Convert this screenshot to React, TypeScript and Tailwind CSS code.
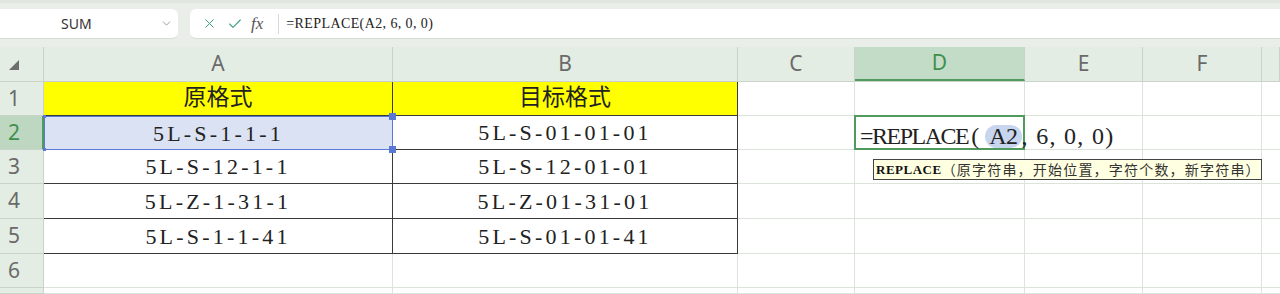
import { ChevronDown, X, Check } from 'lucide-react';

const cols = [44, 349, 345, 117, 170, 118, 119, 18];
const rowHeights = [34, 34, 34, 35, 35, 34, 6];
const letters = ['A', 'B', 'C', 'D', 'E', 'F', ''];

const serif = { fontFamily: '"Liberation Serif", "Noto Sans CJK SC", serif' };

const data: [string, string][] = [
  ['原格式', '目标格式'],
  ['5L-S-1-1-1', '5L-S-01-01-01'],
  ['5L-S-12-1-1', '5L-S-12-01-01'],
  ['5L-Z-1-31-1', '5L-Z-01-31-01'],
  ['5L-S-1-1-41', '5L-S-01-01-41'],
];

function Toolbar() {
  return (
    <div className="h-[47px] bg-[#e9eee9] border-t-[3px] border-[#dfe5df] flex items-start pt-[6px]">
      {/* 名称框 */}
      <div className="w-[178px] h-[30px] bg-white rounded-r-md border-b border-[#d6dcd6] flex items-center relative">
        <span className="absolute left-[61px] text-[14px] text-[#333]" style={{ fontFamily: '"Noto Sans", sans-serif' }}>
          SUM
        </span>
        <ChevronDown className="absolute left-[160px] w-[13px] h-[13px] text-[#888]" strokeWidth={1.5} />
      </div>
      {/* 数式バー */}
      <div className="ml-[12px] flex-1 h-[30px] bg-white rounded-l-md border-b border-[#d6dcd6] flex items-center">
        <X className="ml-[12px] w-[15px] h-[15px] text-[#3a9e7f]" strokeWidth={1.6} />
        <Check className="ml-[10px] w-[16px] h-[16px] text-[#3a9e7f]" strokeWidth={1.6} />
        <span className="ml-[8px] text-[17px] italic text-[#555]" style={serif}>
          fx
        </span>
        <div className="ml-[15px] w-px h-[20px] bg-[#d8d8d8]" />
        <span className="ml-[7px] text-[14px] text-[#222] tracking-[0.4px]" style={serif}>
          =REPLACE(A2, 6, 0, 0)
        </span>
      </div>
    </div>
  );
}

function HeaderRow() {
  return (
    <div className="flex h-[35px] bg-[#e4ede4] border-b border-[#c9d3c9]">
      <div className="w-[44px] shrink-0 border-r border-[#c9d3c9] flex items-end pb-[11px] pl-[9px]">
        <svg width="10" height="10" viewBox="0 0 10 10">
          <polygon points="10,0 10,10 0,10" fill="#6e6e6e" />
        </svg>
      </div>
      {letters.map((l, i) => {
        const active = l === 'D';
        return (
          <div
            key={i}
            style={{ width: cols[i + 1] }}
            className={
              active
                ? 'shrink-0 flex items-center justify-center bg-[#c3dcc7] border-b-2 border-[#4f9a5c] border-r border-r-[#c9d3c9] text-[#3f8f4d] text-[21px]'
                : 'shrink-0 flex items-center justify-center border-r border-[#c9d3c9] text-[#6a6a6a] text-[21px]'
            }
          >
            <span style={{ fontFamily: '"Noto Sans", sans-serif' }}>{l}</span>
          </div>
        );
      })}
    </div>
  );
}

function Row({ index }: { index: number }) {
  const h = rowHeights[index];
  const r = data[index];
  const rowActive = index === 1;
  const inTable = index < 5;
  return (
    <div className="flex" style={{ height: h }}>
      <div
        className={
          rowActive
            ? 'w-[44px] shrink-0 bg-[#bdd7c1] border-r-2 border-[#4f9a5c] border-b border-b-[#c9d3c9] flex items-center pl-[8px] text-[21px] text-[#3f8f4d]'
            : 'w-[44px] shrink-0 bg-[#e4ede4] border-r border-b border-[#c9d3c9] flex items-center pl-[8px] text-[21px] text-[#6a6a6a]'
        }
        style={{ fontFamily: '"Noto Sans", sans-serif' }}
      >
        {h > 10 ? index + 1 : ''}
      </div>
      {/* A 列 */}
      <div
        style={{ width: cols[1] }}
        className={
          index === 0
            ? 'shrink-0 bg-[#ffff00] border-r border-b border-[#3a3a3a] flex items-center justify-center'
            : index === 1
              ? 'shrink-0 bg-[#dbe2f3] border border-[#5a78d4] relative flex items-center justify-center'
              : inTable
                ? 'shrink-0 border-r border-b border-[#3a3a3a] flex items-center justify-center'
                : 'shrink-0 border-r border-b border-[#dbe3db]'
        }
      >
        {r && (
          <span className={index === 0 ? 'text-[23px] text-[#222]' : 'text-[22px] text-[#222] tracking-[3.2px]'} style={serif}>
            {r[0]}
          </span>
        )}
        {index === 1 && (
          <>
            <span className="absolute -left-[2px] -top-[2px] w-[3px] h-[3px] bg-[#5a78d4]" />
            <span className="absolute -right-[4px] -top-[4px] w-[7px] h-[7px] bg-[#5a78d4]" />
            <span className="absolute -right-[4px] -bottom-[4px] w-[7px] h-[7px] bg-[#5a78d4]" />
            <span className="absolute -left-[2px] -bottom-[2px] w-[3px] h-[3px] bg-[#5a78d4]" />
          </>
        )}
      </div>
      {/* B 列 */}
      <div
        style={{ width: cols[2] }}
        className={
          index === 0
            ? 'shrink-0 bg-[#ffff00] border-r border-b border-[#3a3a3a] flex items-center justify-center'
            : inTable
              ? 'shrink-0 border-r border-b border-[#3a3a3a] flex items-center justify-center'
              : 'shrink-0 border-r border-b border-[#dbe3db]'
        }
      >
        {r && (
          <span className={index === 0 ? 'text-[23px] text-[#222]' : 'text-[22px] text-[#222] tracking-[3.2px]'} style={serif}>
            {r[1]}
          </span>
        )}
      </div>
      {/* C 列 */}
      <div style={{ width: cols[3] }} className="shrink-0 border-r border-b border-[#dbe3db]" />
      {/* D 列 */}
      <div style={{ width: cols[4] }} className="shrink-0 border-r border-b border-[#dbe3db] relative">
        {index === 1 && (
          <div className="absolute -left-px -top-px w-[171px] h-[35px] border-2 border-[#4f9a5c] bg-white z-10">
            <div className="absolute left-[4px] top-[1px] flex items-center whitespace-nowrap text-[24px] text-[#222]" style={serif}>
              <span className="tracking-[-1.5px]">=REPLACE</span>
              <span className="ml-[3px]">(</span>
              <span className="ml-[6px] px-[4px] rounded-full bg-[#c8d5ef] tracking-[-0.5px] leading-[23px]">A2</span>
              <span className="tracking-[1.3px]">, 6, 0, 0)</span>
            </div>
          </div>
        )}
        {index === 2 && (
          <div
            className="absolute left-[18px] top-[9px] w-[389px] h-[21px] bg-[#ffffe1] border border-[#444] z-20 flex items-center pl-[2px] whitespace-nowrap"
          >
            <span className="text-[13px] font-bold text-[#111] tracking-[0.5px]" style={serif}>
              REPLACE
            </span>
            <span className="text-[14px] text-[#333] tracking-[1.2px]" style={{ fontFamily: '"Noto Sans CJK SC", sans-serif' }}>
              （原字符串，开始位置，字符个数，新字符串）
            </span>
          </div>
        )}
      </div>
      {/* E F G 列 */}
      <div style={{ width: cols[5] }} className="shrink-0 border-r border-b border-[#dbe3db]" />
      <div style={{ width: cols[6] }} className="shrink-0 border-r border-b border-[#dbe3db]" />
      <div style={{ width: cols[7] }} className="shrink-0 border-b border-[#dbe3db]" />
    </div>
  );
}

export default function App() {
  return (
    <div className="w-[1280px] h-[294px] overflow-hidden bg-white">
      <Toolbar />
      <HeaderRow />
      {rowHeights.map((_, i) => (
        <Row key={i} index={i} />
      ))}
    </div>
  );
}
